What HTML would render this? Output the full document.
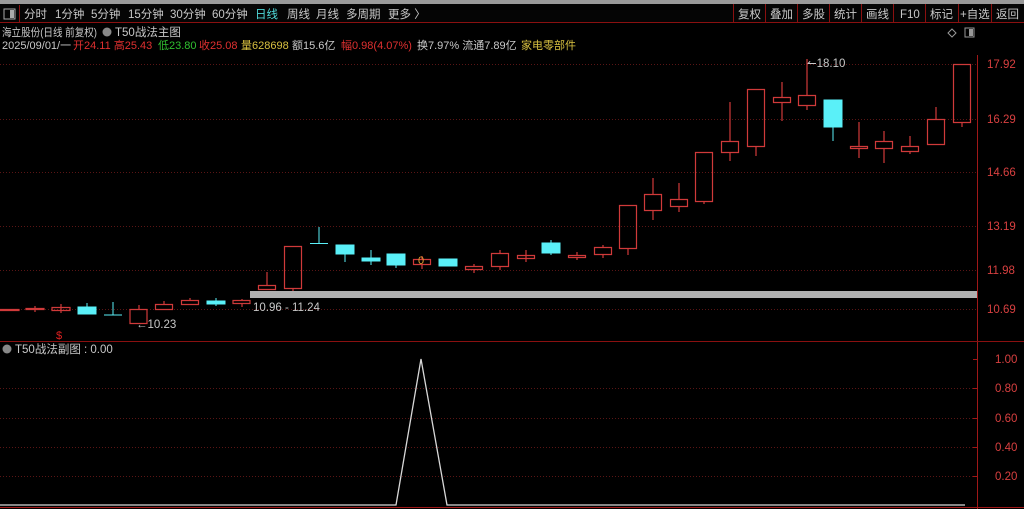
<!DOCTYPE html>
<html><head><meta charset="utf-8"><style>
html,body{margin:0;padding:0;background:#000;width:1024px;height:509px;overflow:hidden}
svg{display:block}
text{font-family:"Liberation Sans","Noto Sans CJK SC",sans-serif}
</style></head><body>
<svg width="1024" height="509" viewBox="0 0 1024 509" xmlns="http://www.w3.org/2000/svg">
<rect x="0" y="0" width="1024" height="509" fill="#000"/>
<rect x="0" y="0" width="1024" height="4" fill="#9a9a9a"/>
<rect x="0" y="4" width="1024" height="18" fill="#050505"/>
<line x1="0" y1="22.5" x2="1024" y2="22.5" stroke="#8a1010"/>
<rect x="4" y="9" width="11" height="10" fill="none" stroke="#aaa"/><rect x="10" y="10" width="4" height="8" fill="#aaa"/>
<line x1="19.5" y1="5" x2="19.5" y2="22" stroke="#8a1010"/>
<g font-size="11.5" fill="#c8c8c8">
<text x="24" y="18">分时</text><text x="55" y="18">1分钟</text><text x="91" y="18">5分钟</text><text x="128" y="18">15分钟</text><text x="170" y="18">30分钟</text><text x="212" y="18">60分钟</text>
<text x="255" y="18" fill="#4fd8d8">日线</text><text x="287" y="18">周线</text><text x="316" y="18">月线</text><text x="346" y="18">多周期</text><text x="388" y="18">更多 〉</text>
</g>
<g stroke="#8a1010"><line x1="733.5" y1="4" x2="733.5" y2="22"/><line x1="765.5" y1="4" x2="765.5" y2="22"/><line x1="797.5" y1="4" x2="797.5" y2="22"/><line x1="829.5" y1="4" x2="829.5" y2="22"/><line x1="861.5" y1="4" x2="861.5" y2="22"/><line x1="893.5" y1="4" x2="893.5" y2="22"/><line x1="925.5" y1="4" x2="925.5" y2="22"/><line x1="958.5" y1="4" x2="958.5" y2="22"/><line x1="991.5" y1="4" x2="991.5" y2="22"/></g>
<g font-size="11.5" fill="#c8c8c8">
<text x="738" y="18">复权</text><text x="770" y="18">叠加</text><text x="802" y="18">多股</text><text x="834" y="18">统计</text><text x="866" y="18">画线</text><text x="900" y="18">F10</text><text x="930" y="18">标记</text><text x="960" y="18">+自选</text><text x="996" y="18">返回</text>
</g>
<g font-size="11.5">
<text x="2" y="36" fill="#c8c8c8" font-size="11" textLength="95" lengthAdjust="spacingAndGlyphs">海立股份(日线 前复权)</text>
<circle cx="107" cy="32" r="4.5" fill="#888"/>
<text x="115" y="36" fill="#c8c8c8">T50战法主图</text>
<text x="2" y="49" fill="#c8c8c8" font-size="11">2025/09/01/一</text>
<text x="73" y="49" fill="#e03030" font-size="11">开24.11 高25.43</text>
<text x="158" y="49" fill="#30c030" font-size="11">低23.80</text>
<text x="199" y="49" fill="#e03030" font-size="11">收25.08</text>
<text x="241" y="49" fill="#d8c040" font-size="11">量628698</text>
<text x="292" y="49" fill="#c8c8c8" font-size="11">额15.6亿</text>
<text x="341" y="49" fill="#e03030" font-size="11">幅0.98(4.07%)</text>
<text x="417" y="49" fill="#c8c8c8" font-size="11">换7.97% 流通7.89亿</text>
<text x="521" y="49" fill="#d8c040" font-size="11">家电零部件</text>
</g>
<path d="M952 29 L956 33 L952 37 L948 33 Z" fill="none" stroke="#999"/>
<rect x="965" y="28" width="9" height="9" fill="none" stroke="#999"/><rect x="969" y="29" width="4" height="7" fill="#999"/>
<line x1="977.5" y1="55" x2="977.5" y2="509" stroke="#a01818"/>
<g stroke="#5a1515" stroke-dasharray="1 2">
<line x1="0" y1="64.5" x2="977" y2="64.5"/><line x1="0" y1="119.5" x2="977" y2="119.5"/><line x1="0" y1="172.5" x2="977" y2="172.5"/><line x1="0" y1="226.5" x2="977" y2="226.5"/><line x1="0" y1="270.5" x2="977" y2="270.5"/><line x1="0" y1="309.5" x2="977" y2="309.5"/>
<line x1="0" y1="388.5" x2="977" y2="388.5"/><line x1="0" y1="418.5" x2="977" y2="418.5"/><line x1="0" y1="447.5" x2="977" y2="447.5"/><line x1="0" y1="476.5" x2="977" y2="476.5"/>
</g>
<g fill="#d84040" font-size="11.5">
<text x="987" y="68">17.92</text><text x="987" y="123">16.29</text><text x="987" y="176">14.66</text><text x="987" y="230">13.19</text><text x="987" y="274">11.98</text><text x="987" y="313">10.69</text>
<text x="995" y="363">1.00</text><text x="995" y="392">0.80</text><text x="995" y="422">0.60</text><text x="995" y="451">0.40</text><text x="995" y="480">0.20</text>
</g>
<g stroke="#a01818"><line x1="973" y1="359.5" x2="978" y2="359.5"/><line x1="973" y1="388.5" x2="978" y2="388.5"/><line x1="973" y1="418.5" x2="978" y2="418.5"/><line x1="973" y1="447.5" x2="978" y2="447.5"/><line x1="973" y1="476.5" x2="978" y2="476.5"/></g>
<rect x="250" y="291" width="727" height="7" fill="#b0b0b0"/>
<g stroke="#d03a3a" fill="none" stroke-width="1.2">
<path d="M0 309.5h19v1h-19z"/>
<path d="M35 306v6M26 308.5h18v1h-18z"/>
<path d="M61 304v9M52 307.5h18v3h-18z"/>
<path d="M139 305v4M130 309.5h17v14h-17z"/>
<path d="M164 301v3M155.5 304.5h17v5h-17z"/>
<path d="M190 298v2M181.5 300.5h17v4h-17z"/>
<path d="M242 299v2M233 300.5h17v3h-17zM242 304v3"/>
<path d="M267 272v13M258.5 285.5h17v4h-17z"/>
<path d="M293 288v3M284.5 246.5h17v42h-17z"/>
<path d="M422 256v3M422 264v5M413.5 259.5h17v5h-17z"/>
<path d="M474 264v2M465.5 266.5h17v3h-17zM474 270v3"/>
<path d="M500 250v3M500 266v4M491.5 253.5h17v13h-17z"/>
<path d="M526 250v12M517.5 255.5h17v3h-17z"/>
<path d="M577 252v3M568.5 255.5h17v2h-17zM577 258v2"/>
<path d="M603 245v3M603 254v4M594.5 247.5h17v7h-17z"/>
<path d="M628 248v7M619.5 205.5h17v43h-17z"/>
<path d="M653 178v16M653 210v10M644.5 194.5h17v16h-17z"/>
<path d="M679 183v16M679 206v6M670.5 199.5h17v7h-17z"/>
<path d="M704 201v3M695.5 152.5h17v49h-17z"/>
<path d="M730 102v39M730 152v9M721.5 141.5h17v11h-17z"/>
<path d="M756 146v10M747.5 89.5h17v57h-17z"/>
<path d="M782 82v15M782 102v19M773.5 97.5h17v5h-17z"/>
<path d="M807 59v36M807 105v5M798.5 95.5h17v10h-17z"/>
<path d="M859 122v24M859 148v10M850.5 146.5h17v2h-17z"/>
<path d="M884 131v10M884 148v15M875.5 141.5h17v7h-17z"/>
<path d="M910 136v10M910 151v3M901.5 146.5h17v5h-17z"/>
<path d="M936 107v12M927.5 119.5h17v25h-17z"/>
<path d="M962 122v5M953.5 64.5h17v58h-17z"/>
</g>
<g fill="#5af0f8" stroke="#5af0f8">
<path d="M87 303v4" fill="none"/><rect x="78" y="307" width="18" height="7"/>
<path d="M113 302v13M104 315h18" fill="none"/>
<path d="M216 298v3M216 304v2" fill="none"/><rect x="207" y="301" width="18" height="3"/>
<path d="M319 227v16M310 243.5h18" fill="none"/>
<path d="M345 254v8" fill="none"/><rect x="336" y="245" width="18" height="9"/>
<path d="M371 250v15" fill="none"/><rect x="362" y="258" width="18" height="3"/>
<path d="M396 265v3" fill="none"/><rect x="387" y="254" width="18" height="11"/>
<rect x="439" y="259" width="18" height="7"/>
<path d="M551 240v3M551 253v2" fill="none"/><rect x="542" y="243" width="18" height="10"/>
<path d="M833 127v14" fill="none"/><rect x="824" y="100" width="18" height="27"/>
</g>
<text x="418" y="264" fill="#e0a030" font-size="11">0</text>
<g fill="#c8c8c8" font-size="11.5">
<text x="253" y="311">10.96 - 11.24</text>
<text x="136" y="328">←10.23</text>
<text x="807" y="67">↼18.10</text>
</g>
<text x="56" y="339" fill="#e02020" font-size="11">$</text>
<line x1="0" y1="341.5" x2="1024" y2="341.5" stroke="#8a1010"/>
<circle cx="7" cy="349" r="4.5" fill="#888"/>
<text x="15" y="353" fill="#c8c8c8" font-size="11.5">T50战法副图 : 0.00</text>
<polyline points="0,505 396,505 421,359 447,505 965,505" fill="none" stroke="#d8d8d8" stroke-width="1.3"/>
<line x1="0" y1="507.5" x2="1024" y2="507.5" stroke="#a01818"/>
</svg>
</body></html>
